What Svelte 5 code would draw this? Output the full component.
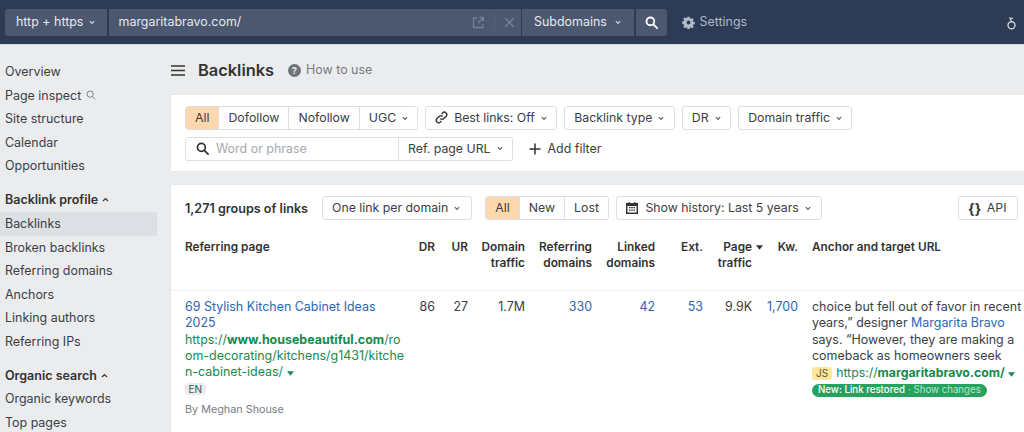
<script>
  const nav1 = ['Overview', 'Page inspect', 'Site structure', 'Calendar', 'Opportunities'];
  const nav2 = ['Backlinks', 'Broken backlinks', 'Referring domains', 'Anchors', 'Linking authors', 'Referring IPs'];
  const nav3 = ['Organic keywords', 'Top pages'];
</script>

{#snippet chev(color = '#555b66')}
  <svg class="chev" width="6" height="5" viewBox="0 0 7 5"><path d="M1 1l2.5 2.5L6 1" fill="none" stroke={color} stroke-width="1.3"/></svg>
{/snippet}
{#snippet mag(size, color, sw)}
  <svg width={size} height={size} viewBox="0 0 14 14"><circle cx="5.8" cy="5.8" r="4.2" fill="none" stroke={color} stroke-width={sw}/><path d="M9 9l4 4" stroke={color} stroke-width={sw} stroke-linecap="round"/></svg>
{/snippet}

<div class="page">
  <header class="top">
    <div class="searchbar">
      <div class="seg proto">http + https {@render chev('#d5dae3')}</div>
      <div class="seg url">
        <span class="urltext">margaritabravo.com/</span>
        <svg class="ext" width="13" height="13" viewBox="0 0 13 13"><path d="M5 2H1.5v9.5H11V8M7.5 1.5h4v4M11.5 1.5L6 7" fill="none" stroke="#75819a" stroke-width="1.3"/></svg>
        <i class="vsep"></i>
        <svg class="close" width="11" height="11" viewBox="0 0 11 11"><path d="M1 1l9 9M10 1l-9 9" stroke="#75819a" stroke-width="1.4"/></svg>
      </div>
      <div class="seg sub">Subdomains {@render chev('#d5dae3')}</div>
      <div class="seg go">{@render mag(13, '#fff', 2)}</div>
    </div>
    <div class="settings">
      <svg width="13" height="13" viewBox="-0.5 0 15 14.2"><path fill="#b2b9c7" fill-rule="evenodd" d="M5.8.5h2.4l.4 1.8 1.1.5 1.6-1 1.7 1.7-1 1.6.5 1.1 1.8.4v2.4l-1.8.4-.5 1.1 1 1.6-1.7 1.7-1.6-1-1.1.5-.4 1.8H5.8l-.4-1.8-1.1-.5-1.6 1-1.7-1.7 1-1.6-.5-1.1L-.3 8.3V5.9l1.8-.4.5-1.1-1-1.6 1.7-1.7 1.6 1 1.1-.5zM7 4.9a2.2 2.2 0 100 4.4 2.2 2.2 0 000-4.4z"/></svg>
      Settings
    </div>
    <svg class="logo" width="9" height="14" viewBox="0 0 9 14"><circle cx="4.5" cy="9.3" r="3.5" fill="none" stroke="#cdd2dc" stroke-width="1.4"/><path d="M4.5 5.6L2.6 1.2M3.2 3.2L6 1.8" fill="none" stroke="#cdd2dc" stroke-width="1.2"/></svg>
  </header>

  <div class="body">
    <aside class="side">
      <ul>
        {#each nav1 as n}
          <li>{n}{#if n === 'Page inspect'}<svg class="pi" width="10" height="10" viewBox="0 0 14 14"><circle cx="5.8" cy="5.8" r="4.4" fill="none" stroke="#7d828b" stroke-width="1.4"/><path d="M9 9l4 4" stroke="#7d828b" stroke-width="1.4"/></svg>{/if}</li>
        {/each}
      </ul>
      <h4>Backlink profile <svg width="7" height="5" viewBox="0 0 7 5"><path d="M1 4l2.5-2.5L6 4" fill="none" stroke="#333" stroke-width="1.2"/></svg></h4>
      <ul>
        {#each nav2 as n}
          <li class:active={n === 'Backlinks'}>{n}</li>
        {/each}
      </ul>
      <h4 class="second">Organic search <svg width="7" height="5" viewBox="0 0 7 5"><path d="M1 4l2.5-2.5L6 4" fill="none" stroke="#333" stroke-width="1.2"/></svg></h4>
      <ul>
        {#each nav3 as n}
          <li>{n}</li>
        {/each}
      </ul>
    </aside>

    <main class="main">
      <div class="title">
        <svg width="14" height="11" viewBox="0 0 14 11"><path d="M0 1h14M0 5.5h14M0 10h14" stroke="#333" stroke-width="1.7"/></svg>
        <h1>Backlinks</h1>
        <svg class="help" width="13" height="13" viewBox="0 0 13 13"><circle cx="6.5" cy="6.5" r="6.5" fill="#6f747c"/><text x="6.5" y="10" text-anchor="middle" font-size="9.5" font-weight="700" fill="#ebecee" font-family="Inter">?</text></svg>
        <span class="howto">How to use</span>
      </div>

      <section class="panel filters">
        <div class="frow first">
          <div class="group">
            <button class="on">All</button><button>Dofollow</button><button>Nofollow</button><button>UGC {@render chev()}</button>
          </div>
          <button class="btn">
            <svg class="ico" width="13" height="13" viewBox="0 0 14 14"><path d="M5.8 8.2a2.6 2.6 0 003.7 0l2.4-2.4a2.6 2.6 0 00-3.7-3.7L7.1 3.2M8.2 5.8a2.6 2.6 0 00-3.7 0L2.1 8.2a2.6 2.6 0 003.7 3.7l1.1-1.1" fill="none" stroke="#333" stroke-width="1.5"/></svg>
            Best links: Off {@render chev()}
          </button>
          <button class="btn">Backlink type {@render chev()}</button>
          <button class="btn">DR {@render chev()}</button>
          <button class="btn">Domain traffic {@render chev()}</button>
        </div>
        <div class="frow">
          <div class="group search">
            <div class="word">{@render mag(13, '#333', 1.9)}<span>Word or phrase</span></div>
            <button>Ref. page URL {@render chev()}</button>
          </div>
          <div class="add">
            <svg width="12" height="12" viewBox="0 0 12 12"><path d="M6 .5v11M.5 6h11" stroke="#333" stroke-width="1.5"/></svg>
            <span>Add filter</span>
          </div>
        </div>
      </section>

      <section class="panel results">
        <div class="rbar">
          <strong>1,271 groups of links</strong>
          <button class="btn">One link per domain {@render chev()}</button>
          <div class="group g2">
            <button class="on">All</button><button>New</button><button>Lost</button>
          </div>
          <button class="btn">
            <svg class="ico" width="12" height="12" viewBox="0 0 12 12"><path fill="#333" fill-rule="evenodd" d="M2.5 0h1.2v1h4.6V0h1.2v1H12v11H0V1h2.5zM1.5 4v6.5h9V4z"/><path fill="#333" d="M3 5h1.6v1.2H3zM5.2 5h1.6v1.2H5.2zM7.4 5H9v1.2H7.4zM3 7.6h1.6v1.2H3zM5.2 7.6h1.6v1.2H5.2zM7.4 7.6H9v1.2H7.4z"/></svg>
            Show history: Last 5 years {@render chev()}
          </button>
          <button class="btn api"><b>{'{ }'}</b> API</button>
        </div>

        <div class="tbl head">
          <div class="l">Referring page</div>
          <div>DR</div>
          <div>UR</div>
          <div>Domain<br />traffic</div>
          <div>Referring<br />domains</div>
          <div>Linked<br />domains</div>
          <div>Ext.</div>
          <div>Page<svg class="sort" width="7" height="5" viewBox="0 0 8 5"><path d="M0 0h8L4 5z" fill="#333"/></svg><br />traffic</div>
          <div>Kw.</div>
          <div class="l anchorh">Anchor and target URL</div>
        </div>

        <div class="tbl row">
          <div class="l pagecell">
            <a class="ttl" href="#a">69 Stylish Kitchen Cabinet Ideas 2025</a>
            <div class="green">https://<b>www.housebeautiful.com</b>/room-decorating/kitchens/g1431/kitchen-cabinet-ideas/ <svg width="7" height="5" viewBox="0 0 8 5"><path d="M0 0h8L4 5z" fill="#158a4c"/></svg></div>
            <span class="tag">EN</span>
            <div class="by">By Meghan Shouse</div>
          </div>
          <div>86</div>
          <div>27</div>
          <div>1.7M</div>
          <div class="lnk">330</div>
          <div class="lnk">42</div>
          <div class="lnk">53</div>
          <div>9.9K</div>
          <div class="lnk">1,700</div>
          <div class="l anchor">
            <div class="snip">choice but fell out of favor in recent years,” designer <span class="lnk">Margarita Bravo</span> says. “However, they are making a comeback as homeowners seek</div>
            <div class="target"><span class="js">JS</span><span class="green">https://<b>margaritabravo.com/</b></span> <svg width="7" height="5" viewBox="0 0 8 5"><path d="M0 0h8L4 5z" fill="#158a4c"/></svg></div>
            <div class="pill"><span>New: Link restored</span><em>· Show changes</em></div>
          </div>
        </div>
      </section>
    </main>
  </div>
</div>

<style>
  :global(body) { margin: 0; background: #ebecee; overflow: hidden; }
  .page {
    width: 1024px; height: 432px; overflow: hidden;
    font-family: Inter, "Liberation Sans", sans-serif; font-size: 12.45px; line-height: 16.25px; color: #3a3e45;
  }
  button { font: inherit; font-size: 12.3px; color: inherit; background: #fff; border: 0; padding: 0; white-space: nowrap; }
  ul { list-style: none; margin: 0; padding: 0; }

  .top { height: 45px; background: #2d3b55; display: flex; align-items: center; box-sizing: border-box; padding: 0 8px 0 5px; border-bottom: 1px solid #d8dadf; }
  .searchbar { display: flex; gap: 1.5px; height: 27px; }
  .seg { background: #4b5870; color: #e6e9ef; display: flex; align-items: center; }
  .proto { width: 102px; padding-left: 11px; box-sizing: border-box; border-radius: 3px 0 0 3px; gap: 6px; }
  .url { width: 412px; box-sizing: border-box; padding-left: 10px; }
  .urltext { flex: 1; }
  .ext { margin-right: 9px; }
  .vsep { width: 1px; height: 14px; background: #56637b; margin-right: 9px; }
  .close { margin-right: 6px; }
  .sub { width: 112px; box-sizing: border-box; padding-left: 12px; gap: 8px; }
  .go { width: 31px; justify-content: center; border-radius: 0 3px 3px 0; }
  .settings { display: flex; align-items: center; gap: 5px; margin-left: 15px; color: #b2b9c7; }
  .logo { margin-left: auto; margin-top: 1px; }

  .body { display: flex; }
  .side { width: 171px; flex: none; padding-top: 15px; box-sizing: border-box; }
  .side li { height: 23.5px; line-height: 23.5px; padding-left: 5px; margin-right: 14px; border-radius: 0 3px 3px 0; }
  .side li.active { background: #dcdfe4; }
  .pi { margin-left: 5px; }
  .side h4 { margin: 12px 0 0; height: 22.5px; font-size: 12.5px; line-height: 20px; font-weight: 600; padding-left: 5px; color: #333; }
  .side h4 svg { vertical-align: 2px; margin-left: 1px; }
  .side h4.second { margin-top: 13px; height: 21px; }

  .main { flex: 1; min-width: 0; }
  .title { height: 50px; display: flex; align-items: center; color: #333; }
  .title h1 { font-size: 16.4px; font-weight: 600; margin: 0 0 0 13px; }
  .help { margin-left: 14px; }
  .howto { color: #767b83; margin-left: 5px; }
  .panel { background: #fff; box-shadow: 0 0 1px rgba(0,0,0,.12); }
  .filters { height: 76px; padding: 11px 14px 0; box-sizing: border-box; display: flex; flex-direction: column; gap: 8px; }
  .frow { display: flex; gap: 7.5px; height: 23px; }
  .frow.first { gap: 7px; }
  .group { display: flex; border: 1px solid #dcdee2; border-radius: 3px; box-sizing: border-box; height: 23.5px; overflow: hidden; }
  .group button { padding: 0 9px; border-left: 1px solid #dcdee2; display: flex; align-items: center; gap: 6px; }
  .group button:first-child { border-left: 0; }
  .group button.on { background: #fdd8ae; border-left: 0; }
  .first button, .rbar button { padding-top: 1px; }
  .btn { height: 23.5px; border: 1px solid #dcdee2; border-radius: 3px; padding: 0 10.5px 0 9px; display: flex; align-items: center; gap: 6px; box-sizing: border-box; }
  .first .btn { padding-right: 9.5px; }
  .btn .ico { margin-right: 1px; margin-top: -1px; }
  .first .btn .ico { margin-right: 0; }
  .search { width: 328px; }
  .word { width: 212px; flex: none; display: flex; align-items: center; gap: 7px; padding-left: 10px; box-sizing: border-box; }
  .word span { color: #a5a8ae; }
  .search button { flex: 1; }
  .add { display: flex; align-items: center; gap: 7px; margin-left: 8px; }
  .add span { position: relative; top: 1px; }

  .results { margin-top: 14px; height: 250px; }
  .rbar { height: 46px; display: flex; align-items: center; padding: 0 6px 0 14px; }
  .rbar strong { font-weight: 600; font-size: 12.6px; color: #333; width: 137px; white-space: nowrap; position: relative; top: 1px; }
  .g2 { margin: 0 7.5px 0 13.5px; }
  .api { margin-left: auto; gap: 7px; }
  .api b { font-weight: 700; font-size: 14px; letter-spacing: -1.5px; line-height: 14px; color: #333; }

  .tbl { display: grid; grid-template-columns: 234px 30px 33px 57px 67px 63px 48px 49px 46px 1fr; text-align: right; }
  .tbl .l { text-align: left; }
  .head { height: 60px; box-sizing: border-box; font-weight: 600; color: #333; border-bottom: 1px solid #eef0f2; padding-top: 8px; font-size: 11.8px; }
  .sort { margin-left: 4px; margin-right: -11px; vertical-align: 1px; }
  .head > .l:first-child, .pagecell { padding-left: 14px; }
  .anchorh, .anchor { padding-left: 14px; }
  .anchorh { white-space: nowrap; }
  .row { padding-top: 8px; }
  .lnk { color: #2a66b3; }
  .ttl { color: #2a66b3; text-decoration: none; display: block; }
  .green { color: #158a4c; word-break: break-all; }
  .green b { font-weight: 700; }
  .tag { display: inline-block; background: #ebecee; border-radius: 3px; color: #4d5157; font-size: 10px; line-height: 12px; padding: 0 3.5px; margin-top: 3px; vertical-align: top; }
  .by { color: #777c84; font-size: 10.8px; margin-top: 5px; }
  .target { white-space: nowrap; margin-top: 1px; font-size: 12.3px; }
  .js { background: #fde79a; color: #555; border-radius: 3px; font-size: 10px; line-height: 13px; padding: 0 4px; margin-right: 4px; display: inline-block; }
  .pill { display: inline-block; background: #25a35e; color: #fff; border-radius: 7px; font-size: 9.7px; line-height: 12.5px; padding: 0 6px; margin-top: 2px; white-space: nowrap; font-weight: 500; }
  .pill em { font-style: normal; color: #b7e6cb; font-weight: 400; margin-left: 3px; }
</style>
